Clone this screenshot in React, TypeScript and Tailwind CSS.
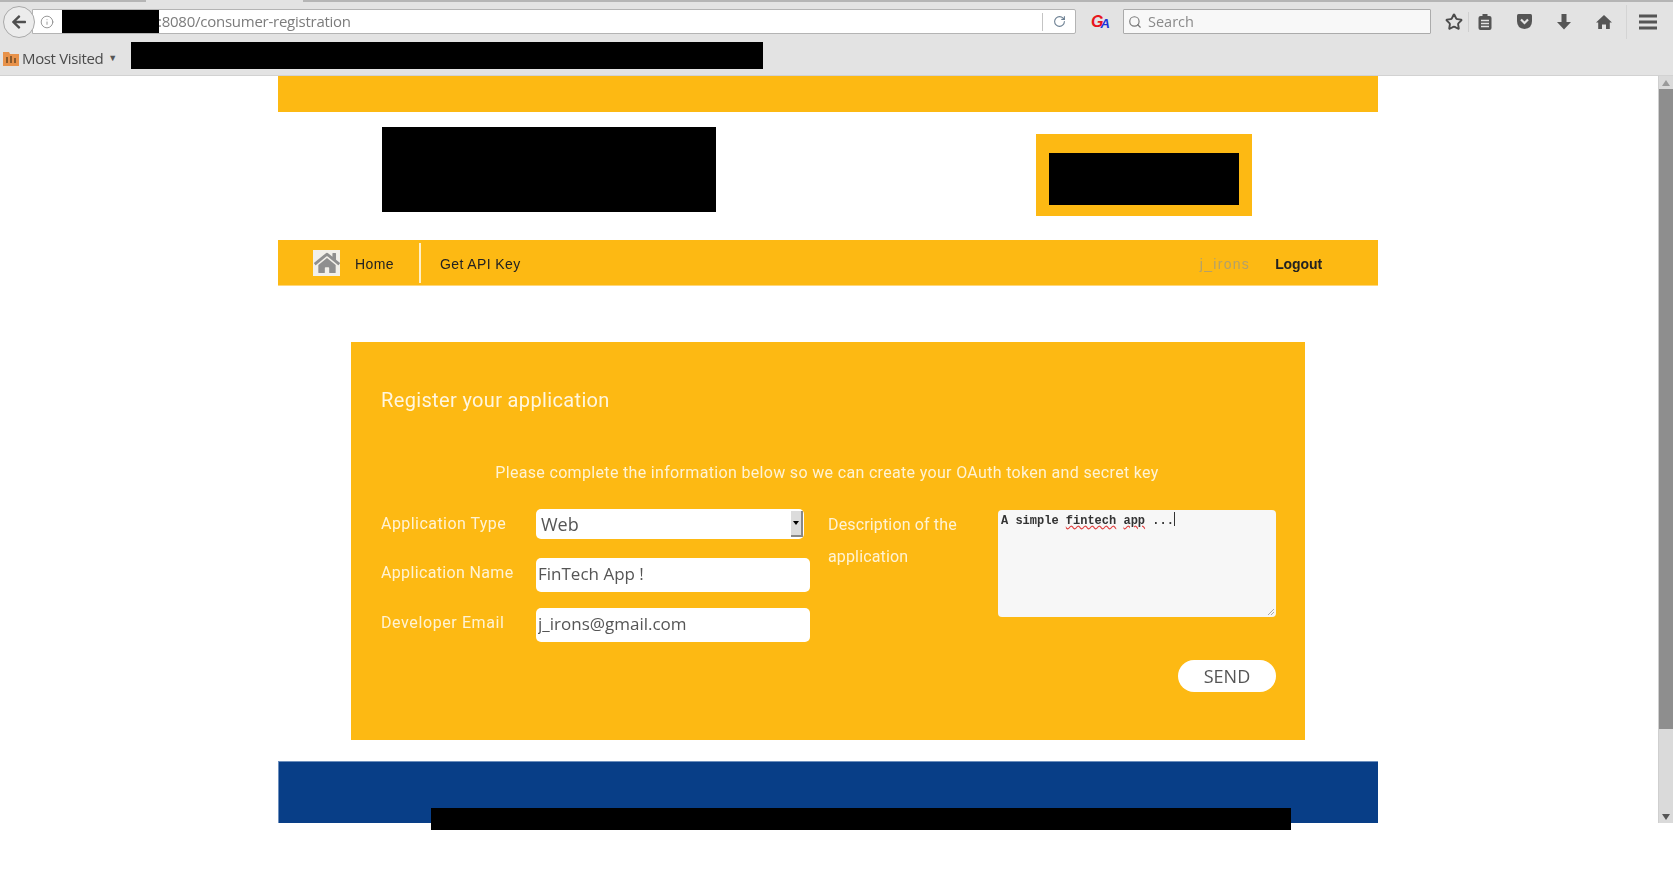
import { Search, RotateCw, Star, Info } from "lucide-react";
import { FaArrowLeft, FaHome } from "react-icons/fa";

function Label({ children, className = "" }: { children: React.ReactNode; className?: string }) {
  return <div className={"font-['Roboto',sans-serif] text-[16px] text-[#fff3d4] blur-[0.5px] " + className}>{children}</div>;
}

function Field({ value }: { value: string }) {
  return (
    <input
      readOnly
      value={value}
      className="h-[34px] w-[274px] rounded-[5px] bg-white pb-[4px] pl-[2px] font-['Open_Sans',sans-serif] text-[17px] text-[#555] outline-none blur-[0.4px]"
    />
  );
}

export default function App() {
  return (
    <div className="flex h-[872px] w-[1673px] flex-col overflow-hidden bg-white">
      {/* Browser chrome */}
      <div className="flex h-[76px] shrink-0 flex-col border-b border-[#d2d2d2] bg-[#e3e3e3] font-['Open_Sans',sans-serif]">
        <div className="flex h-[2px] shrink-0">
          <div className="w-[146px] bg-[#b5b5b5]" />
          <div className="w-[157px] bg-[#e3e3e3]" />
          <div className="flex-1 bg-[#b5b5b5]" />
        </div>
        <div className="relative flex h-[37px] items-center pt-[2px]">
          <div className="z-10 ml-[3px] flex h-[32px] w-[32px] items-center justify-center rounded-full border border-[#a9a9a9] bg-[#ececec]">
            <FaArrowLeft className="h-[16px] w-[16px] text-[#4f4f4f]" />
          </div>
          <div className="-ml-[3px] flex h-[25px] w-[1044px] items-center rounded-r-[2px] border border-[#b4b4b4] bg-white pl-[7px]">
            <Info className="h-[14px] w-[14px] text-[#8a8a8a]" strokeWidth={1.5} />
            <div className="ml-[8px] h-[23px] w-[97px] bg-black" />
            <span className="-ml-[1px] text-[15px] tracking-[-0.25px] text-[#7c7c7c] blur-[0.4px]">:8080/consumer-registration</span>
            <div className="ml-auto h-[18px] w-px bg-[#c4c4c4]" />
            <div className="flex w-[32px] items-center justify-center">
              <RotateCw className="h-[13px] w-[13px] text-[#6b7f92]" strokeWidth={2} />
            </div>
          </div>
          <div className="ml-[15px] flex w-[18px] items-end font-['Liberation_Sans',sans-serif] text-[16px] leading-none font-bold italic">
            <span className="text-[#e8141c]">G</span>
            <span className="-ml-[3px] text-[13px] text-[#1a35d8]">A</span>
          </div>
          <div className="ml-[14px] flex h-[25px] w-[308px] items-center rounded-[1px] border border-[#ababab] bg-[#f8f8f8] pl-[4px]">
            <Search className="h-[14px] w-[14px] text-[#777]" strokeWidth={2} />
            <span className="ml-[6px] text-[14.5px] text-[#8a8a8a] blur-[0.4px]">Search</span>
          </div>
          <Star className="ml-[14px] h-[18px] w-[18px] text-[#4a4a4a]" strokeWidth={2.5} />
          <div className="ml-[5px] h-[20px] w-px bg-[#cfcfcf]" />
          <svg className="ml-[8px] h-[18px] w-[16px]" viewBox="0 0 16 18">
            <rect x="1.5" y="3" width="13" height="14" rx="2" fill="#555" />
            <rect x="5.5" y="1" width="5" height="4" fill="#555" />
            <path d="M4 7.5h8M4 10.5h8M4 13.5h8" stroke="#e3e3e3" strokeWidth="1.3" />
          </svg>
          <svg className="ml-[23px] h-[17px] w-[17px]" viewBox="0 0 17 17">
            <path d="M1 2.5 Q1 1 2.5 1 H14.5 Q16 1 16 2.5 V8 Q16 15.5 8.5 16 Q1 15.5 1 8 Z" fill="#555" />
            <path d="M5 6.5 L8.5 10 L12 6.5" fill="none" stroke="#e3e3e3" strokeWidth="2.2" />
          </svg>
          <svg className="ml-[23px] h-[16px] w-[16px]" viewBox="0 0 16 16">
            <path d="M5.5 0h5v8h4.5L8 15.5 1 8h4.5z" fill="#555" />
          </svg>
          <svg className="ml-[24px] h-[16px] w-[16px]" viewBox="0 0 16 16">
            <path d="M8 1 16 8.5h-2.2V15H10v-4.5H6V15H2.2V8.500H0z" fill="#555" />
          </svg>
          <div className="ml-[14px] h-[34px] w-px bg-[#d4d4d4]" />
          <svg className="ml-[12px] h-[16px] w-[18px]" viewBox="0 0 18 16">
            <path d="M0 2h18M0 8h18M0 14h18" stroke="#555" strokeWidth="2.8" />
          </svg>
        </div>
        <div className="flex flex-1 items-center pb-[3px]">
          <svg className="ml-[3px] mt-[5px] h-[16px] w-[16px]" viewBox="0 0 16 16">
            <path d="M0 2h6l1 2h9v12H0z" fill="#e8924a" />
            <path d="M3 7h2v6H3zM7 6h2v7H7zM11 8h2v5h-2z" fill="#8a5a2c" />
          </svg>
          <span className="ml-[3px] mt-[5px] text-[15px] tracking-[-0.35px] text-[#4b4b4b] blur-[0.4px]">Most Visited</span>
          <span className="ml-[5px] mt-[5px] text-[9px] text-[#555]">▼</span>
          <div className="ml-[14px] h-[27px] w-[632px] bg-black" />
        </div>
      </div>

      {/* Viewport */}
      <div className="flex h-[747px] shrink-0">
        <div className="flex-1">
          <div className="ml-[278px] flex w-[1100px] flex-col">
            <div className="h-[36px] bg-[#fdb913]" />

            <div className="flex h-[128px] items-start">
              <div className="ml-[104px] mt-[15px] h-[85px] w-[334px] bg-black" />
              <div className="ml-[320px] mt-[22px] flex h-[82px] w-[216px] items-center justify-center bg-[#fdb913] pt-[6px]">
                <div className="mt-[2px] h-[52px] w-[190px] bg-black" />
              </div>
            </div>

            <div className="flex h-[46px] items-center border-b border-[#ffd77a] bg-[#fdb913] font-['Liberation_Sans',sans-serif] text-[14px] text-[#222]">
              <div className="ml-[35px] flex h-[26px] w-[27px] items-center justify-center bg-[#f2f0ea]">
                <FaHome className="h-[26px] w-[26px] text-[#8f8f8f]" />
              </div>
              <span className="ml-[15px] mt-[3px] tracking-[0.4px] blur-[0.5px]">Home</span>
              <div className="ml-[25px] h-[40px] w-[2px] bg-[#fff0c8]" />
              <span className="ml-[19px] mt-[3px] tracking-[0.4px] blur-[0.5px]">Get API Key</span>
              <span className="ml-auto mt-[3px] tracking-[1.3px] text-[#b3a06a] blur-[0.5px]">j_irons</span>
              <span className="ml-[25px] mr-[56px] mt-[3px] font-bold tracking-[-0.1px] blur-[0.5px]">Logout</span>
            </div>

            <div className="mx-[73px] mt-[56px] flex h-[398px] flex-col bg-[#fdb913] pl-[30px] pr-[29px]">
              <div className="mt-[43px] font-['Roboto',sans-serif] text-[20px] leading-[30px] tracking-[0.35px] text-[#fff6df] blur-[0.5px]">Register your application</div>
              <div className="mt-[46px] pr-[3px] text-center font-['Roboto',sans-serif] text-[16px] leading-[24px] tracking-[0.33px] text-[#fff3d4] blur-[0.5px]">
                Please complete the information below so we can create your OAuth token and secret key
              </div>
              <div className="mt-[24px] flex">
                <div className="flex w-[430px] flex-col">
                  <div className="flex h-[30px] items-center">
                    <Label className="w-[155px] tracking-[0.45px]">Application Type</Label>
                    <div className="flex h-[30px] w-[268px] items-center rounded-[5px] bg-white pl-[5px] pr-[1px]">
                      <span className="font-['Open_Sans',sans-serif] text-[18px] text-[#555] blur-[0.4px]">Web</span>
                      <div className="ml-auto flex h-[26px] w-[12px] items-center justify-center border-r-2 border-b-2 border-[#888] bg-[#dcdcdc]">
                        <div className="h-0 w-0 border-x-[3px] border-t-[4px] border-x-transparent border-t-black" />
                      </div>
                    </div>
                  </div>
                  <div className="mt-[19px] flex h-[34px] items-center">
                    <Label className="w-[155px] -translate-y-[2px] tracking-[0.35px]">Application Name</Label>
                    <Field value="FinTech App !" />
                  </div>
                  <div className="mt-[16px] flex h-[34px] items-center">
                    <Label className="w-[155px] -translate-y-[2px] tracking-[0.6px]">Developer Email</Label>
                    <Field value="j_irons@gmail.com" />
                  </div>
                </div>
                <div className="ml-[17px] w-[170px]">
                  <Label className="leading-[32px] tracking-[0.15px]">Description of the application</Label>
                </div>
                <div className="flex-1">
                  <div className="relative mt-[1px] h-[107px] rounded-[4px] bg-[#f7f7f7] px-[3px] font-['Liberation_Mono',monospace] text-[12px] leading-[14px] font-bold text-[#333] blur-[0.3px]">
                    A simple{" "}
                    <span className="underline decoration-[#e04040] decoration-wavy">fintech</span>{" "}
                    <span className="underline decoration-[#e04040] decoration-wavy">app</span> ...
                    <span className="inline-block h-[14px] w-px translate-y-[2px] bg-[#333]" />
                    <svg className="absolute bottom-[1px] right-[1px] h-[8px] w-[8px]" viewBox="0 0 8 8">
                      <path d="M7 1 L1 7 M7 4 L4 7" stroke="#aaa" strokeWidth="1" />
                    </svg>
                  </div>
                </div>
              </div>
              <div className="mt-[18px] flex justify-end">
                <div className="flex h-[32px] w-[98px] items-center justify-center rounded-full bg-white font-['Open_Sans',sans-serif] text-[18px] text-[#555] blur-[0.4px]">
                  SEND
                </div>
              </div>
            </div>

            <div className="relative mt-[21px] h-[62px] border-t border-l border-[#6d8fbd] bg-[#083e87]">
              <div className="absolute left-[152px] top-[46px] h-[22px] w-[860px] bg-black" />
            </div>
          </div>
        </div>

        {/* Scrollbar */}
        <div className="flex w-[15px] shrink-0 flex-col items-center border-l border-[#cfcfcf] bg-[#dadada]">
          <div className="flex h-[13px] w-full items-center justify-center">
            <div className="h-0 w-0 border-x-[4px] border-b-[6px] border-x-transparent border-b-[#9a9a9a]" />
          </div>
          <div className="h-[640px] w-full bg-[#8e8e8e]" />
          <div className="mt-auto mb-[3px] h-0 w-0 border-x-[4px] border-t-[6px] border-x-transparent border-t-[#555]" />
        </div>
      </div>
    </div>
  );
}
